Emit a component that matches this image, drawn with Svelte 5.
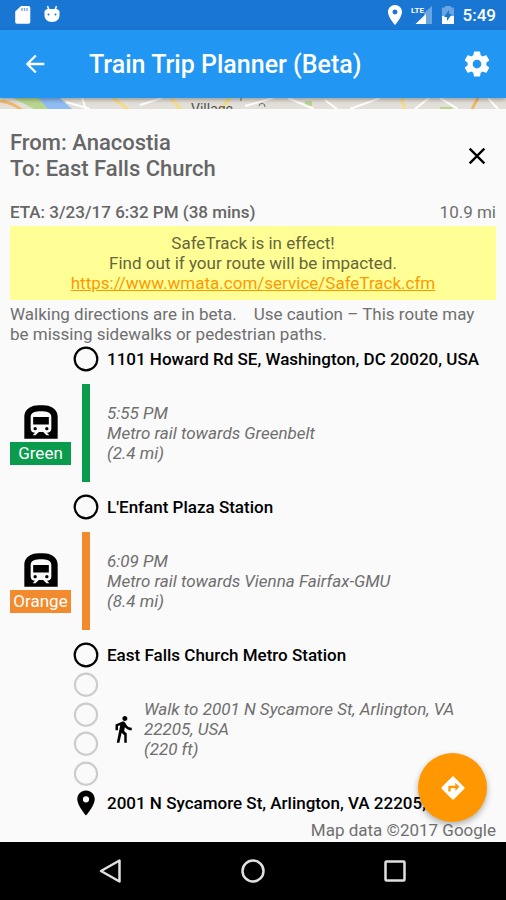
<script lang="ts">
	interface Leg {
		from: string;
		line: string;
		cls: string;
		time: string;
		text: string;
		distance: string;
	}

	const legs: Leg[] = [
		{
			from: '1101 Howard Rd SE, Washington, DC 20020, USA',
			line: 'Green',
			cls: 'green',
			time: '5:55 PM',
			text: 'Metro rail towards Greenbelt',
			distance: '(2.4 mi)'
		},
		{
			from: "L'Enfant Plaza Station",
			line: 'Orange',
			cls: 'orange',
			time: '6:09 PM',
			text: 'Metro rail towards Vienna Fairfax-GMU',
			distance: '(8.4 mi)'
		}
	];
</script>

{#snippet ring()}
	<svg class="ring" viewBox="0 0 30 30" aria-hidden="true">
		<circle cx="15" cy="15" r="11.3" fill="none" stroke="currentColor" stroke-width="2.2" />
	</svg>
{/snippet}

{#snippet pin()}
	<path
		fill="currentColor"
		d="M12 2C8.13 2 5 5.13 5 9c0 5.25 7 13 7 13s7-7.75 7-13c0-3.87-3.13-7-7-7zm0 9.5a2.5 2.5 0 0 1 0-5 2.5 2.5 0 0 1 0 5z"
	/>
{/snippet}

<div class="screen">
	<div class="status">
		<svg width="18" height="22" viewBox="0 0 18 22" aria-hidden="true">
			<path
				fill="#fff"
				d="M7 2h7.5a1.8 1.8 0 0 1 1.8 1.8V18a1.8 1.8 0 0 1-1.8 1.8H3A1.8 1.8 0 0 1 1.2 18V7.5z"
			/>
			<path stroke="#1976d2" stroke-width="1.4" d="M8 4v3M10.5 4v3M13 4v3" opacity=".6" />
		</svg>
		<svg width="18" height="22" viewBox="0 0 18 22" aria-hidden="true">
			<path stroke="#fff" stroke-width="1.5" d="M4.5 2l1.5 4M13.5 2L12 6" />
			<path fill="#fff" d="M4 5h10l2.5 2v4c0 4-2.5 7-7.5 7s-7.5-3-7.5-7V7z" />
			<circle cx="5.5" cy="10.5" r="1" fill="#1976d2" />
			<circle cx="12.5" cy="10.5" r="1" fill="#1976d2" />
		</svg>
		<div class="status-right">
			<svg width="16" height="22" viewBox="4 1 16 22" aria-hidden="true">{@render pin()}</svg>
			<svg width="22" height="22" viewBox="0 0 22 22" aria-hidden="true">
				<path fill="#fff" opacity=".35" d="M21 2v18H5l8-8V9z" />
				<path fill="#fff" d="M4.5 20L15 10v10z" />
				<text x="0" y="9" fill="#fff" font-size="8" font-weight="700">LTE</text>
			</svg>
			<svg width="14" height="22" viewBox="0 0 14 22" aria-hidden="true">
				<path fill="#fff" opacity=".35" d="M1 3.5h3V2h6v1.5h3V12H1z" />
				<path fill="#fff" d="M1 12h12v8H1z" />
				<path fill="#1976d2" d="M8 6l-5 7h3v4l5-7H8z" />
			</svg>
			<span>5:49</span>
		</div>
	</div>

	<header>
		<button aria-label="Back">
			<svg width="28" height="28" viewBox="0 0 24 24">
				<path fill="#fff" d="M20 11H7.83l5.59-5.59L12 4l-8 8 8 8 1.41-1.41L7.83 13H20v-2z" />
			</svg>
		</button>
		<h1>Train Trip Planner (Beta)</h1>
		<button aria-label="Settings">
			<svg width="30" height="30" viewBox="0 0 24 24">
				<path
					fill="#fff"
					d="M19.43 12.98c.04-.32.07-.64.07-.98s-.03-.66-.07-.98l2.11-1.65c.19-.15.24-.42.12-.64l-2-3.46c-.12-.22-.39-.3-.61-.22l-2.49 1c-.52-.4-1.08-.73-1.69-.98l-.38-2.65C14.46 2.18 14.25 2 14 2h-4c-.25 0-.46.18-.49.42l-.38 2.65c-.61.25-1.17.59-1.69.98l-2.49-1c-.23-.09-.49 0-.61.22l-2 3.46c-.13.22-.07.49.12.64l2.11 1.65c-.04.32-.07.65-.07.98s.03.66.07.98l-2.11 1.65c-.19.15-.24.42-.12.64l2 3.46c.12.22.39.3.61.22l2.49-1c.52.4 1.08.73 1.69.98l.38 2.65c.03.24.24.42.49.42h4c.25 0 .46-.18.49-.42l.38-2.65c.61-.25 1.17-.59 1.69-.98l2.49 1c.23.09.49 0 .61-.22l2-3.46c.12-.22.07-.49-.12-.64l-2.11-1.65zM12 15.5c-1.93 0-3.5-1.57-3.5-3.5s1.57-3.5 3.5-3.5 3.5 1.57 3.5 3.5-1.57 3.5-3.5 3.5z"
				/>
			</svg>
		</button>
	</header>

	<div class="map">
		<svg viewBox="0 0 506 11" preserveAspectRatio="xMidYMin slice" aria-hidden="true">
			<rect width="506" height="11" fill="#e3e0d9" />
			<path fill="#b9d68f" d="M13 0h28l13 11H34zM305 3h7v5h-7zM440 9h12v2h-12z" />
			<path fill="#8fbcf5" d="M38 0h22l12 11H48z" />
			<path fill="none" stroke="#f0b968" stroke-width="3" d="M0 3c10 1 16 5 22 9M478 0l-6 11" />
			<path
				fill="none"
				stroke="#f5dc85"
				stroke-width="3"
				d="M113 0l16 12M171 0l10 12M230 0l-9 11M402 0l2 11"
			/>
			<path
				fill="none"
				stroke="#fff"
				stroke-width="2"
				d="M66 4l24 7M82 0l4 11M140 7l22-7M245 8l28-8M288 0l26 11M325 2l12 9M350 11l30-11M415 11l14-11M440 0l18 11M488 0l10 11"
			/>
			<path fill="none" stroke="#666" d="M241 0v3M259 8a3 3 0 1 1 6 1" />
			<text x="191" y="16" font-size="14" fill="#555">Village</text>
		</svg>
	</div>

	<main>
		<div class="trip">
			<h2>From: Anacostia<br />To: East Falls Church</h2>
			<button aria-label="Close">
				<svg width="28" height="28" viewBox="0 0 24 24">
					<path
						d="M19 6.41L17.59 5 12 10.59 6.41 5 5 6.41 10.59 12 5 17.59 6.41 19 12 13.41 17.59 19 19 17.59 13.41 12z"
					/>
				</svg>
			</button>
		</div>

		<div class="eta">
			<strong>ETA: 3/23/17 6:32 PM (38 mins)</strong>
			<span>10.9 mi</span>
		</div>

		<p class="notice">
			SafeTrack is in effect!<br />
			Find out if your route will be impacted.<br />
			<a href="https://www.wmata.com/service/SafeTrack.cfm">https://www.wmata.com/service/SafeTrack.cfm</a>
		</p>

		<p class="warning">
			Walking directions are in beta. &nbsp;&nbsp; Use caution – This route may be missing sidewalks or
			pedestrian paths.
		</p>

		<div class="route">
			{#each legs as leg (leg.line)}
				<div class="stop">
					{@render ring()}
					<strong>{leg.from}</strong>
				</div>
				<div class="leg {leg.cls}">
					<div class="line">
						<svg width="40" height="40" viewBox="0 0 24 24" aria-hidden="true">
							<path
								d="M17.8 2.8C16 2.09 13.86 2 12 2s-4 .09-5.8.8C3.53 3.84 2 6.05 2 8.86V22h20V8.86c0-2.81-1.53-5.02-4.2-6.06z"
							/>
							<path
								fill="#fafafa"
								d="M12 5.5c3 0 6.2.3 6.2 3.5v7c0 1.5-1.2 2.5-2.6 2.5l1.4 1.5h-1.7l-2-2h-2.6l-2 2H7l1.4-1.5C7 18.5 5.8 17.5 5.8 16V9c0-3.200 3.200-3.500 6.200-3.500z"
							/>
							<path d="M7.3 9h9.400v4.500H7.300z" />
							<circle cx="8.5" cy="16" r="1" />
							<circle cx="15.5" cy="16" r="1" />
						</svg>
						<span class="badge">{leg.line}</span>
					</div>
					<div class="bar"></div>
					<p class="step">{leg.time}<br />{leg.text}<br />{leg.distance}</p>
				</div>
			{/each}

			<div class="stop">
				{@render ring()}
				<strong>East Falls Church Metro Station</strong>
			</div>
			<div class="leg">
				<div class="dots">
					{#each [0, 1, 2, 3] as dot (dot)}
						{@render ring()}
					{/each}
				</div>
				<div class="walk">
					<svg width="30" height="30" viewBox="0 0 24 24" aria-hidden="true">
						<path
							d="M13.5 5.5c1.1 0 2-.9 2-2s-.9-2-2-2-2 .9-2 2 .9 2 2 2zM9.8 8.9L7 23h2.1l1.8-8 2.1 2v6h2v-7.5l-2.1-2 .6-3C14.8 12 16.8 13 19 13v-2c-1.9 0-3.5-1-4.3-2.4l-1-1.6c-.4-.6-1-1-1.7-1-.3 0-.5.1-.8.1L6 8.3V13h2V9.6l1.8-.7"
						/>
					</svg>
					<p class="step">Walk to 2001 N Sycamore St, Arlington, VA 22205, USA<br />(220 ft)</p>
				</div>
			</div>
			<div class="stop">
				<svg class="ring" viewBox="0 0 24 24" aria-hidden="true">{@render pin()}</svg>
				<strong>2001 N Sycamore St, Arlington, VA 22205, USA</strong>
			</div>
		</div>

		<p class="credit">Map data ©2017 Google</p>

		<button class="fab" aria-label="Directions">
			<svg width="28" height="28" viewBox="0 0 24 24">
				<path
					fill="#fff"
					d="M21.71 11.29l-9-9c-.39-.39-1.02-.39-1.41 0l-9 9c-.39.39-.39 1.02 0 1.41l9 9c.39.39 1.02.39 1.41 0l9-9c.39-.38.39-1.01 0-1.41zM14 14.5V12h-4v3H8v-4c0-.55.45-1 1-1h5V7.5l3.5 3.5-3.5 3.5z"
				/>
			</svg>
		</button>
	</main>

	<nav>
		<button aria-label="Back">
			<svg width="28" height="28" viewBox="0 0 28 28">
				<path d="M22.5 3.5v21L4 14z" />
			</svg>
		</button>
		<button aria-label="Home">
			<svg width="28" height="28" viewBox="0 0 28 28">
				<circle cx="14" cy="14" r="10.5" />
			</svg>
		</button>
		<button aria-label="Recent apps">
			<svg width="28" height="28" viewBox="0 0 28 28">
				<rect x="4.5" y="4.5" width="19" height="19" rx="1" />
			</svg>
		</button>
	</nav>
</div>

<style>
	:global(body) {
		background: #fafafa;
	}

	.screen {
		display: flex;
		flex-direction: column;
		min-height: 100vh;
		font-family: Roboto, 'Liberation Sans', sans-serif;
		font-size: 17px;
		line-height: 20px;
		color: #6f6f6f;
	}

	h1,
	h2,
	p {
		margin: 0;
	}

	strong {
		font-weight: 500;
	}

	svg {
		display: block;
		flex: none;
	}

	button {
		display: flex;
		align-items: center;
		justify-content: center;
		padding: 0;
		border: 0;
		background: none;
		cursor: pointer;
	}

	/* --- Top bars --- */
	.status {
		display: flex;
		align-items: center;
		gap: 11px;
		height: 30px;
		padding: 0 10px 0 14px;
		background: #1976d2;
		color: #fff;
	}

	.status-right {
		display: flex;
		align-items: center;
		gap: 8px;
		margin-left: auto;
		font-weight: 500;
	}

	header {
		display: flex;
		align-items: center;
		height: 68px;
		padding: 0 14px 0 21px;
		background: #2196f3;
		box-shadow: 0 2px 4px rgba(0, 0, 0, 0.3);
		position: relative;
	}

	h1 {
		flex: 1;
		margin-left: 40px;
		padding-top: 2px;
		font-size: 25px;
		line-height: 32px;
		font-weight: 500;
		color: #fff;
	}

	.map {
		height: 11px;
		overflow: hidden;
	}

	.map svg {
		width: 100%;
		height: 100%;
	}

	/* --- Trip panel --- */
	main {
		position: relative;
		flex: 1;
		padding: 21px 10px 2px;
		background: #fafafa;
	}

	.trip {
		display: flex;
		align-items: center;
		justify-content: space-between;
		padding-right: 5px;
	}

	h2 {
		font-size: 22px;
		line-height: 26px;
		font-weight: 500;
		color: #666;
	}

	.eta {
		display: flex;
		justify-content: space-between;
		margin: 20px 0 4px;
	}

	.eta strong {
		color: #666;
	}

	.notice {
		padding: 7px;
		background: #ffff96;
		text-align: center;
		color: #66663a;
	}

	.notice a {
		color: #ff9800;
	}

	.warning {
		margin-top: 4px;
	}

	.stop {
		display: flex;
		align-items: center;
		gap: 6px;
		height: 30px;
		padding-left: 61px;
		color: #000;
		white-space: nowrap;
	}

	.ring {
		width: 30px;
		height: 30px;
	}

	.leg {
		display: grid;
		grid-template-columns: 61px 30px 1fr;
		align-items: center;
		min-height: 118px;
	}

	.line {
		display: flex;
		flex-direction: column;
		align-items: center;
	}

	.badge {
		width: 100%;
		line-height: 23px;
		text-align: center;
		color: #fff;
	}

	.bar {
		align-self: stretch;
		justify-self: center;
		width: 8px;
		margin: 10px 0;
	}

	.green .badge,
	.green .bar {
		background: #0a9b4c;
	}

	.orange .badge,
	.orange .bar {
		background: #f28a2e;
	}

	.step {
		padding-left: 6px;
		font-style: italic;
	}

	.dots {
		grid-column: 2;
		display: flex;
		flex-direction: column;
		height: 118px;
		color: #ccc;
	}

	.dots .ring {
		flex: 1;
		min-height: 0;
	}

	.walk {
		display: flex;
		align-items: center;
		padding: 0 10px 0 7px;
	}

	.credit {
		margin-top: 2px;
		text-align: right;
	}

	.fab {
		position: absolute;
		right: 19px;
		bottom: 20px;
		width: 69px;
		height: 69px;
		border-radius: 50%;
		background: #ff9800;
		box-shadow: 0 3px 6px rgba(0, 0, 0, 0.3);
	}

	/* --- System navigation --- */
	nav {
		display: flex;
		justify-content: center;
		gap: 114px;
		padding: 15px 0;
		background: #000;
	}

	nav svg {
		fill: none;
		stroke: #e0e0e0;
		stroke-width: 2.5;
		stroke-linejoin: round;
	}
</style>
